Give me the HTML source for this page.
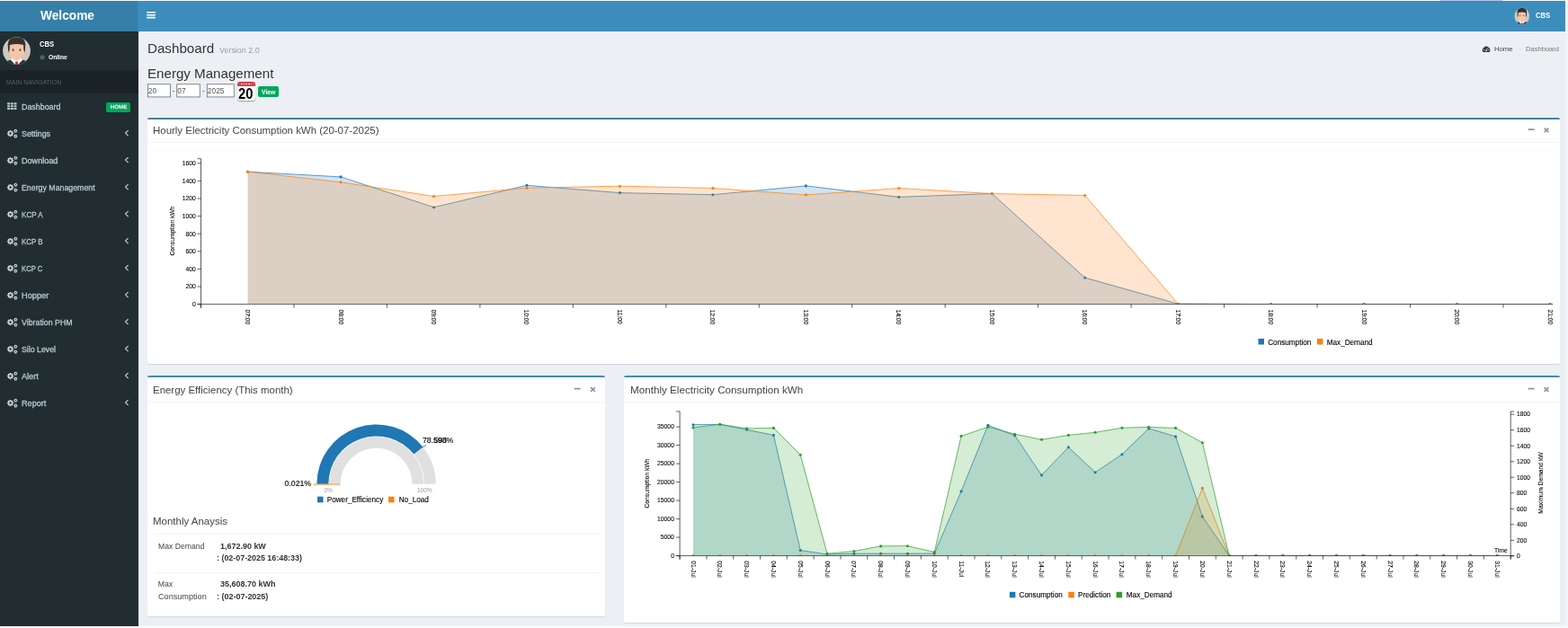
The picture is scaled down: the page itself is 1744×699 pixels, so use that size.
<!DOCTYPE html><html><head><meta charset="utf-8"><title>Dashboard</title><style>
html,body{margin:0;padding:0}
body{width:1744px;height:699px;overflow:hidden;background:#ecf0f5;position:relative;font-family:"Liberation Sans",sans-serif}
.a{position:absolute}
.t{position:absolute;white-space:pre;line-height:1;transform-origin:0 50%;font-family:"Liberation Sans",sans-serif}
#tx{position:absolute;left:0;top:0;width:1744px;height:699px;will-change:transform}
.box{position:absolute;background:#fff;border-top:2px solid #3c8dbc;border-radius:2px;box-shadow:0 1px 1px rgba(0,0,0,.1)}
.hl{position:absolute;height:1px;background:#f4f4f4}
svg{position:absolute;left:0;top:0;will-change:transform}
</style></head><body>
<div class="a" style="left:0;top:0;width:1744px;height:1px;background:#f6f8fa"></div>
<div class="a" style="left:1602px;top:0;width:69px;height:1px;background:#b4c6e6"></div>
<div class="a" style="left:0;top:1px;width:153px;height:34px;background:#367fa9"></div>
<div class="a" style="left:153px;top:1px;width:1588px;height:34px;background:#3c8dbc"></div>
<div class="a" style="left:0;top:35px;width:153.6px;height:664px;background:#222d32"></div>
<div class="a" style="left:0;top:78px;width:153.6px;height:26px;background:#1a2226"></div>
<div class="a" style="left:1740.6px;top:0;width:4px;height:699px;background:#f3f4f7"></div>
<div class="a" style="left:0;top:697.3px;width:1744px;height:2px;background:#f9fafc"></div>
<div class="a" style="left:118px;top:114px;width:27.4px;height:10.8px;background:#00a65a;border-radius:1.7px"></div>
<div class="box" style="left:163.6px;top:130.8px;width:1571px;height:272px;border-top-color:#4b7f9f"></div>
<div class="box" style="left:163.6px;top:418.3px;width:509.6px;height:265.9px"></div>
<div class="box" style="left:693.7px;top:418.3px;width:1040.9px;height:273.0px"></div>
<div class="hl" style="left:163.6px;top:158px;width:1571px"></div>
<div class="hl" style="left:169px;top:166.5px;width:1561px;background:#f7f7f7"></div>
<div class="hl" style="left:163.6px;top:447px;width:510px"></div>
<div class="hl" style="left:693.7px;top:447px;width:1040.9px"></div>
<div class="hl" style="left:171.5px;top:594.2px;width:495px"></div>
<div class="hl" style="left:171.5px;top:637.2px;width:495px"></div>
<div class="a" style="left:263.8px;top:91.2px;width:20.5px;height:20.7px;background:#fff;border-radius:3px;box-shadow:0 0.4px 1px rgba(0,0,0,.35);overflow:hidden"><div style="height:4.8px;background:#d8404c"></div></div>
<div class="a" style="left:267.5px;top:93.0px;width:13.5px;height:1.4px;background:repeating-linear-gradient(90deg,#f6d9dc 0 1.6px,transparent 1.6px 2.7px)"></div>
<div class="a" style="left:286.9px;top:95.9px;width:23.5px;height:11.9px;background:#00a65a;border-radius:2px"></div>
<svg width="1744" height="699" viewBox="0 0 1744 699">
<rect x="164.42" y="93.75" width="25.05" height="14.2" fill="#fff" stroke="#727272" stroke-width="0.85"/>
<rect x="196.72" y="93.75" width="25.55" height="14.2" fill="#fff" stroke="#727272" stroke-width="0.85"/>
<rect x="230.32" y="93.75" width="29.95" height="14.2" fill="#fff" stroke="#727272" stroke-width="0.85"/>
<rect x="163.1" y="12.9" width="9.8" height="1.6" rx="0.3" fill="#fff"/>
<rect x="163.1" y="15.9" width="9.8" height="1.6" rx="0.3" fill="#fff"/>
<rect x="163.1" y="18.8" width="9.8" height="1.6" rx="0.3" fill="#fff"/>
<rect x="8.10" y="114.30" width="3.0" height="2.1" rx="0.3" fill="#b8c7ce"/>
<rect x="11.80" y="114.30" width="3.0" height="2.1" rx="0.3" fill="#b8c7ce"/>
<rect x="15.50" y="114.30" width="3.0" height="2.1" rx="0.3" fill="#b8c7ce"/>
<rect x="8.10" y="117.15" width="3.0" height="2.1" rx="0.3" fill="#b8c7ce"/>
<rect x="11.80" y="117.15" width="3.0" height="2.1" rx="0.3" fill="#b8c7ce"/>
<rect x="15.50" y="117.15" width="3.0" height="2.1" rx="0.3" fill="#b8c7ce"/>
<rect x="8.10" y="120.00" width="3.0" height="2.1" rx="0.3" fill="#b8c7ce"/>
<rect x="11.80" y="120.00" width="3.0" height="2.1" rx="0.3" fill="#b8c7ce"/>
<rect x="15.50" y="120.00" width="3.0" height="2.1" rx="0.3" fill="#b8c7ce"/>
<path d="M15.19,147.91 L15.19,149.19 L14.43,149.24 L14.07,150.10 L14.58,150.68 L13.68,151.58 L13.10,151.07 L12.24,151.43 L12.19,152.19 L10.91,152.19 L10.86,151.43 L10.00,151.07 L9.42,151.58 L8.52,150.68 L9.03,150.10 L8.67,149.24 L7.91,149.19 L7.91,147.91 L8.67,147.86 L9.03,147.00 L8.52,146.42 L9.42,145.52 L10.00,146.03 L10.86,145.67 L10.91,144.91 L12.19,144.91 L12.24,145.67 L13.10,146.03 L13.68,145.52 L14.58,146.42 L14.07,147.00 L14.43,147.86Z M10.35,148.55 a1.20,1.20 0 1,0 2.40,0 a1.20,1.20 0 1,0 -2.40,0Z M19.44,145.26 L19.44,146.24 L18.94,146.27 L18.60,146.87 L18.82,147.32 L17.97,147.81 L17.70,147.39 L17.00,147.39 L16.73,147.81 L15.88,147.32 L16.10,146.87 L15.76,146.27 L15.26,146.24 L15.26,145.26 L15.76,145.23 L16.10,144.63 L15.88,144.18 L16.73,143.69 L17.00,144.11 L17.70,144.11 L17.97,143.69 L18.82,144.18 L18.60,144.63 L18.94,145.23Z M16.65,145.75 a0.70,0.70 0 1,0 1.40,0 a0.70,0.70 0 1,0 -1.40,0Z M19.39,151.11 L19.39,152.09 L18.89,152.12 L18.55,152.72 L18.77,153.17 L17.92,153.66 L17.65,153.24 L16.95,153.24 L16.68,153.66 L15.83,153.17 L16.05,152.72 L15.71,152.12 L15.21,152.09 L15.21,151.11 L15.71,151.08 L16.05,150.48 L15.83,150.03 L16.68,149.54 L16.95,149.96 L17.65,149.96 L17.92,149.54 L18.77,150.03 L18.55,150.48 L18.89,151.08Z M16.60,151.60 a0.70,0.70 0 1,0 1.40,0 a0.70,0.70 0 1,0 -1.40,0Z" fill="#c3d0d6" fill-rule="evenodd"/>
<path d="M142.60,145.10 L139.60,148.10 L142.60,151.10" stroke="#b8c7ce" stroke-width="1.3" fill="none"/>
<path d="M15.19,177.91 L15.19,179.19 L14.43,179.24 L14.07,180.10 L14.58,180.68 L13.68,181.58 L13.10,181.07 L12.24,181.43 L12.19,182.19 L10.91,182.19 L10.86,181.43 L10.00,181.07 L9.42,181.58 L8.52,180.68 L9.03,180.10 L8.67,179.24 L7.91,179.19 L7.91,177.91 L8.67,177.86 L9.03,177.00 L8.52,176.42 L9.42,175.52 L10.00,176.03 L10.86,175.67 L10.91,174.91 L12.19,174.91 L12.24,175.67 L13.10,176.03 L13.68,175.52 L14.58,176.42 L14.07,177.00 L14.43,177.86Z M10.35,178.55 a1.20,1.20 0 1,0 2.40,0 a1.20,1.20 0 1,0 -2.40,0Z M19.44,175.26 L19.44,176.24 L18.94,176.27 L18.60,176.87 L18.82,177.32 L17.97,177.81 L17.70,177.39 L17.00,177.39 L16.73,177.81 L15.88,177.32 L16.10,176.87 L15.76,176.27 L15.26,176.24 L15.26,175.26 L15.76,175.23 L16.10,174.63 L15.88,174.18 L16.73,173.69 L17.00,174.11 L17.70,174.11 L17.97,173.69 L18.82,174.18 L18.60,174.63 L18.94,175.23Z M16.65,175.75 a0.70,0.70 0 1,0 1.40,0 a0.70,0.70 0 1,0 -1.40,0Z M19.39,181.11 L19.39,182.09 L18.89,182.12 L18.55,182.72 L18.77,183.17 L17.92,183.66 L17.65,183.24 L16.95,183.24 L16.68,183.66 L15.83,183.17 L16.05,182.72 L15.71,182.12 L15.21,182.09 L15.21,181.11 L15.71,181.08 L16.05,180.48 L15.83,180.03 L16.68,179.54 L16.95,179.96 L17.65,179.96 L17.92,179.54 L18.77,180.03 L18.55,180.48 L18.89,181.08Z M16.60,181.60 a0.70,0.70 0 1,0 1.40,0 a0.70,0.70 0 1,0 -1.40,0Z" fill="#c3d0d6" fill-rule="evenodd"/>
<path d="M142.60,175.10 L139.60,178.10 L142.60,181.10" stroke="#b8c7ce" stroke-width="1.3" fill="none"/>
<path d="M15.19,207.91 L15.19,209.19 L14.43,209.24 L14.07,210.10 L14.58,210.68 L13.68,211.58 L13.10,211.07 L12.24,211.43 L12.19,212.19 L10.91,212.19 L10.86,211.43 L10.00,211.07 L9.42,211.58 L8.52,210.68 L9.03,210.10 L8.67,209.24 L7.91,209.19 L7.91,207.91 L8.67,207.86 L9.03,207.00 L8.52,206.42 L9.42,205.52 L10.00,206.03 L10.86,205.67 L10.91,204.91 L12.19,204.91 L12.24,205.67 L13.10,206.03 L13.68,205.52 L14.58,206.42 L14.07,207.00 L14.43,207.86Z M10.35,208.55 a1.20,1.20 0 1,0 2.40,0 a1.20,1.20 0 1,0 -2.40,0Z M19.44,205.26 L19.44,206.24 L18.94,206.27 L18.60,206.87 L18.82,207.32 L17.97,207.81 L17.70,207.39 L17.00,207.39 L16.73,207.81 L15.88,207.32 L16.10,206.87 L15.76,206.27 L15.26,206.24 L15.26,205.26 L15.76,205.23 L16.10,204.63 L15.88,204.18 L16.73,203.69 L17.00,204.11 L17.70,204.11 L17.97,203.69 L18.82,204.18 L18.60,204.63 L18.94,205.23Z M16.65,205.75 a0.70,0.70 0 1,0 1.40,0 a0.70,0.70 0 1,0 -1.40,0Z M19.39,211.11 L19.39,212.09 L18.89,212.12 L18.55,212.72 L18.77,213.17 L17.92,213.66 L17.65,213.24 L16.95,213.24 L16.68,213.66 L15.83,213.17 L16.05,212.72 L15.71,212.12 L15.21,212.09 L15.21,211.11 L15.71,211.08 L16.05,210.48 L15.83,210.03 L16.68,209.54 L16.95,209.96 L17.65,209.96 L17.92,209.54 L18.77,210.03 L18.55,210.48 L18.89,211.08Z M16.60,211.60 a0.70,0.70 0 1,0 1.40,0 a0.70,0.70 0 1,0 -1.40,0Z" fill="#c3d0d6" fill-rule="evenodd"/>
<path d="M142.60,205.10 L139.60,208.10 L142.60,211.10" stroke="#b8c7ce" stroke-width="1.3" fill="none"/>
<path d="M15.19,237.91 L15.19,239.19 L14.43,239.24 L14.07,240.10 L14.58,240.68 L13.68,241.58 L13.10,241.07 L12.24,241.43 L12.19,242.19 L10.91,242.19 L10.86,241.43 L10.00,241.07 L9.42,241.58 L8.52,240.68 L9.03,240.10 L8.67,239.24 L7.91,239.19 L7.91,237.91 L8.67,237.86 L9.03,237.00 L8.52,236.42 L9.42,235.52 L10.00,236.03 L10.86,235.67 L10.91,234.91 L12.19,234.91 L12.24,235.67 L13.10,236.03 L13.68,235.52 L14.58,236.42 L14.07,237.00 L14.43,237.86Z M10.35,238.55 a1.20,1.20 0 1,0 2.40,0 a1.20,1.20 0 1,0 -2.40,0Z M19.44,235.26 L19.44,236.24 L18.94,236.27 L18.60,236.87 L18.82,237.32 L17.97,237.81 L17.70,237.39 L17.00,237.39 L16.73,237.81 L15.88,237.32 L16.10,236.87 L15.76,236.27 L15.26,236.24 L15.26,235.26 L15.76,235.23 L16.10,234.63 L15.88,234.18 L16.73,233.69 L17.00,234.11 L17.70,234.11 L17.97,233.69 L18.82,234.18 L18.60,234.63 L18.94,235.23Z M16.65,235.75 a0.70,0.70 0 1,0 1.40,0 a0.70,0.70 0 1,0 -1.40,0Z M19.39,241.11 L19.39,242.09 L18.89,242.12 L18.55,242.72 L18.77,243.17 L17.92,243.66 L17.65,243.24 L16.95,243.24 L16.68,243.66 L15.83,243.17 L16.05,242.72 L15.71,242.12 L15.21,242.09 L15.21,241.11 L15.71,241.08 L16.05,240.48 L15.83,240.03 L16.68,239.54 L16.95,239.96 L17.65,239.96 L17.92,239.54 L18.77,240.03 L18.55,240.48 L18.89,241.08Z M16.60,241.60 a0.70,0.70 0 1,0 1.40,0 a0.70,0.70 0 1,0 -1.40,0Z" fill="#c3d0d6" fill-rule="evenodd"/>
<path d="M142.60,235.10 L139.60,238.10 L142.60,241.10" stroke="#b8c7ce" stroke-width="1.3" fill="none"/>
<path d="M15.19,267.91 L15.19,269.19 L14.43,269.24 L14.07,270.10 L14.58,270.68 L13.68,271.58 L13.10,271.07 L12.24,271.43 L12.19,272.19 L10.91,272.19 L10.86,271.43 L10.00,271.07 L9.42,271.58 L8.52,270.68 L9.03,270.10 L8.67,269.24 L7.91,269.19 L7.91,267.91 L8.67,267.86 L9.03,267.00 L8.52,266.42 L9.42,265.52 L10.00,266.03 L10.86,265.67 L10.91,264.91 L12.19,264.91 L12.24,265.67 L13.10,266.03 L13.68,265.52 L14.58,266.42 L14.07,267.00 L14.43,267.86Z M10.35,268.55 a1.20,1.20 0 1,0 2.40,0 a1.20,1.20 0 1,0 -2.40,0Z M19.44,265.26 L19.44,266.24 L18.94,266.27 L18.60,266.87 L18.82,267.32 L17.97,267.81 L17.70,267.39 L17.00,267.39 L16.73,267.81 L15.88,267.32 L16.10,266.87 L15.76,266.27 L15.26,266.24 L15.26,265.26 L15.76,265.23 L16.10,264.63 L15.88,264.18 L16.73,263.69 L17.00,264.11 L17.70,264.11 L17.97,263.69 L18.82,264.18 L18.60,264.63 L18.94,265.23Z M16.65,265.75 a0.70,0.70 0 1,0 1.40,0 a0.70,0.70 0 1,0 -1.40,0Z M19.39,271.11 L19.39,272.09 L18.89,272.12 L18.55,272.72 L18.77,273.17 L17.92,273.66 L17.65,273.24 L16.95,273.24 L16.68,273.66 L15.83,273.17 L16.05,272.72 L15.71,272.12 L15.21,272.09 L15.21,271.11 L15.71,271.08 L16.05,270.48 L15.83,270.03 L16.68,269.54 L16.95,269.96 L17.65,269.96 L17.92,269.54 L18.77,270.03 L18.55,270.48 L18.89,271.08Z M16.60,271.60 a0.70,0.70 0 1,0 1.40,0 a0.70,0.70 0 1,0 -1.40,0Z" fill="#c3d0d6" fill-rule="evenodd"/>
<path d="M142.60,265.10 L139.60,268.10 L142.60,271.10" stroke="#b8c7ce" stroke-width="1.3" fill="none"/>
<path d="M15.19,297.91 L15.19,299.19 L14.43,299.24 L14.07,300.10 L14.58,300.68 L13.68,301.58 L13.10,301.07 L12.24,301.43 L12.19,302.19 L10.91,302.19 L10.86,301.43 L10.00,301.07 L9.42,301.58 L8.52,300.68 L9.03,300.10 L8.67,299.24 L7.91,299.19 L7.91,297.91 L8.67,297.86 L9.03,297.00 L8.52,296.42 L9.42,295.52 L10.00,296.03 L10.86,295.67 L10.91,294.91 L12.19,294.91 L12.24,295.67 L13.10,296.03 L13.68,295.52 L14.58,296.42 L14.07,297.00 L14.43,297.86Z M10.35,298.55 a1.20,1.20 0 1,0 2.40,0 a1.20,1.20 0 1,0 -2.40,0Z M19.44,295.26 L19.44,296.24 L18.94,296.27 L18.60,296.87 L18.82,297.32 L17.97,297.81 L17.70,297.39 L17.00,297.39 L16.73,297.81 L15.88,297.32 L16.10,296.87 L15.76,296.27 L15.26,296.24 L15.26,295.26 L15.76,295.23 L16.10,294.63 L15.88,294.18 L16.73,293.69 L17.00,294.11 L17.70,294.11 L17.97,293.69 L18.82,294.18 L18.60,294.63 L18.94,295.23Z M16.65,295.75 a0.70,0.70 0 1,0 1.40,0 a0.70,0.70 0 1,0 -1.40,0Z M19.39,301.11 L19.39,302.09 L18.89,302.12 L18.55,302.72 L18.77,303.17 L17.92,303.66 L17.65,303.24 L16.95,303.24 L16.68,303.66 L15.83,303.17 L16.05,302.72 L15.71,302.12 L15.21,302.09 L15.21,301.11 L15.71,301.08 L16.05,300.48 L15.83,300.03 L16.68,299.54 L16.95,299.96 L17.65,299.96 L17.92,299.54 L18.77,300.03 L18.55,300.48 L18.89,301.08Z M16.60,301.60 a0.70,0.70 0 1,0 1.40,0 a0.70,0.70 0 1,0 -1.40,0Z" fill="#c3d0d6" fill-rule="evenodd"/>
<path d="M142.60,295.10 L139.60,298.10 L142.60,301.10" stroke="#b8c7ce" stroke-width="1.3" fill="none"/>
<path d="M15.19,327.91 L15.19,329.19 L14.43,329.24 L14.07,330.10 L14.58,330.68 L13.68,331.58 L13.10,331.07 L12.24,331.43 L12.19,332.19 L10.91,332.19 L10.86,331.43 L10.00,331.07 L9.42,331.58 L8.52,330.68 L9.03,330.10 L8.67,329.24 L7.91,329.19 L7.91,327.91 L8.67,327.86 L9.03,327.00 L8.52,326.42 L9.42,325.52 L10.00,326.03 L10.86,325.67 L10.91,324.91 L12.19,324.91 L12.24,325.67 L13.10,326.03 L13.68,325.52 L14.58,326.42 L14.07,327.00 L14.43,327.86Z M10.35,328.55 a1.20,1.20 0 1,0 2.40,0 a1.20,1.20 0 1,0 -2.40,0Z M19.44,325.26 L19.44,326.24 L18.94,326.27 L18.60,326.87 L18.82,327.32 L17.97,327.81 L17.70,327.39 L17.00,327.39 L16.73,327.81 L15.88,327.32 L16.10,326.87 L15.76,326.27 L15.26,326.24 L15.26,325.26 L15.76,325.23 L16.10,324.63 L15.88,324.18 L16.73,323.69 L17.00,324.11 L17.70,324.11 L17.97,323.69 L18.82,324.18 L18.60,324.63 L18.94,325.23Z M16.65,325.75 a0.70,0.70 0 1,0 1.40,0 a0.70,0.70 0 1,0 -1.40,0Z M19.39,331.11 L19.39,332.09 L18.89,332.12 L18.55,332.72 L18.77,333.17 L17.92,333.66 L17.65,333.24 L16.95,333.24 L16.68,333.66 L15.83,333.17 L16.05,332.72 L15.71,332.12 L15.21,332.09 L15.21,331.11 L15.71,331.08 L16.05,330.48 L15.83,330.03 L16.68,329.54 L16.95,329.96 L17.65,329.96 L17.92,329.54 L18.77,330.03 L18.55,330.48 L18.89,331.08Z M16.60,331.60 a0.70,0.70 0 1,0 1.40,0 a0.70,0.70 0 1,0 -1.40,0Z" fill="#c3d0d6" fill-rule="evenodd"/>
<path d="M142.60,325.10 L139.60,328.10 L142.60,331.10" stroke="#b8c7ce" stroke-width="1.3" fill="none"/>
<path d="M15.19,357.91 L15.19,359.19 L14.43,359.24 L14.07,360.10 L14.58,360.68 L13.68,361.58 L13.10,361.07 L12.24,361.43 L12.19,362.19 L10.91,362.19 L10.86,361.43 L10.00,361.07 L9.42,361.58 L8.52,360.68 L9.03,360.10 L8.67,359.24 L7.91,359.19 L7.91,357.91 L8.67,357.86 L9.03,357.00 L8.52,356.42 L9.42,355.52 L10.00,356.03 L10.86,355.67 L10.91,354.91 L12.19,354.91 L12.24,355.67 L13.10,356.03 L13.68,355.52 L14.58,356.42 L14.07,357.00 L14.43,357.86Z M10.35,358.55 a1.20,1.20 0 1,0 2.40,0 a1.20,1.20 0 1,0 -2.40,0Z M19.44,355.26 L19.44,356.24 L18.94,356.27 L18.60,356.87 L18.82,357.32 L17.97,357.81 L17.70,357.39 L17.00,357.39 L16.73,357.81 L15.88,357.32 L16.10,356.87 L15.76,356.27 L15.26,356.24 L15.26,355.26 L15.76,355.23 L16.10,354.63 L15.88,354.18 L16.73,353.69 L17.00,354.11 L17.70,354.11 L17.97,353.69 L18.82,354.18 L18.60,354.63 L18.94,355.23Z M16.65,355.75 a0.70,0.70 0 1,0 1.40,0 a0.70,0.70 0 1,0 -1.40,0Z M19.39,361.11 L19.39,362.09 L18.89,362.12 L18.55,362.72 L18.77,363.17 L17.92,363.66 L17.65,363.24 L16.95,363.24 L16.68,363.66 L15.83,363.17 L16.05,362.72 L15.71,362.12 L15.21,362.09 L15.21,361.11 L15.71,361.08 L16.05,360.48 L15.83,360.03 L16.68,359.54 L16.95,359.96 L17.65,359.96 L17.92,359.54 L18.77,360.03 L18.55,360.48 L18.89,361.08Z M16.60,361.60 a0.70,0.70 0 1,0 1.40,0 a0.70,0.70 0 1,0 -1.40,0Z" fill="#c3d0d6" fill-rule="evenodd"/>
<path d="M142.60,355.10 L139.60,358.10 L142.60,361.10" stroke="#b8c7ce" stroke-width="1.3" fill="none"/>
<path d="M15.19,387.91 L15.19,389.19 L14.43,389.24 L14.07,390.10 L14.58,390.68 L13.68,391.58 L13.10,391.07 L12.24,391.43 L12.19,392.19 L10.91,392.19 L10.86,391.43 L10.00,391.07 L9.42,391.58 L8.52,390.68 L9.03,390.10 L8.67,389.24 L7.91,389.19 L7.91,387.91 L8.67,387.86 L9.03,387.00 L8.52,386.42 L9.42,385.52 L10.00,386.03 L10.86,385.67 L10.91,384.91 L12.19,384.91 L12.24,385.67 L13.10,386.03 L13.68,385.52 L14.58,386.42 L14.07,387.00 L14.43,387.86Z M10.35,388.55 a1.20,1.20 0 1,0 2.40,0 a1.20,1.20 0 1,0 -2.40,0Z M19.44,385.26 L19.44,386.24 L18.94,386.27 L18.60,386.87 L18.82,387.32 L17.97,387.81 L17.70,387.39 L17.00,387.39 L16.73,387.81 L15.88,387.32 L16.10,386.87 L15.76,386.27 L15.26,386.24 L15.26,385.26 L15.76,385.23 L16.10,384.63 L15.88,384.18 L16.73,383.69 L17.00,384.11 L17.70,384.11 L17.97,383.69 L18.82,384.18 L18.60,384.63 L18.94,385.23Z M16.65,385.75 a0.70,0.70 0 1,0 1.40,0 a0.70,0.70 0 1,0 -1.40,0Z M19.39,391.11 L19.39,392.09 L18.89,392.12 L18.55,392.72 L18.77,393.17 L17.92,393.66 L17.65,393.24 L16.95,393.24 L16.68,393.66 L15.83,393.17 L16.05,392.72 L15.71,392.12 L15.21,392.09 L15.21,391.11 L15.71,391.08 L16.05,390.48 L15.83,390.03 L16.68,389.54 L16.95,389.96 L17.65,389.96 L17.92,389.54 L18.77,390.03 L18.55,390.48 L18.89,391.08Z M16.60,391.60 a0.70,0.70 0 1,0 1.40,0 a0.70,0.70 0 1,0 -1.40,0Z" fill="#c3d0d6" fill-rule="evenodd"/>
<path d="M142.60,385.10 L139.60,388.10 L142.60,391.10" stroke="#b8c7ce" stroke-width="1.3" fill="none"/>
<path d="M15.19,417.91 L15.19,419.19 L14.43,419.24 L14.07,420.10 L14.58,420.68 L13.68,421.58 L13.10,421.07 L12.24,421.43 L12.19,422.19 L10.91,422.19 L10.86,421.43 L10.00,421.07 L9.42,421.58 L8.52,420.68 L9.03,420.10 L8.67,419.24 L7.91,419.19 L7.91,417.91 L8.67,417.86 L9.03,417.00 L8.52,416.42 L9.42,415.52 L10.00,416.03 L10.86,415.67 L10.91,414.91 L12.19,414.91 L12.24,415.67 L13.10,416.03 L13.68,415.52 L14.58,416.42 L14.07,417.00 L14.43,417.86Z M10.35,418.55 a1.20,1.20 0 1,0 2.40,0 a1.20,1.20 0 1,0 -2.40,0Z M19.44,415.26 L19.44,416.24 L18.94,416.27 L18.60,416.87 L18.82,417.32 L17.97,417.81 L17.70,417.39 L17.00,417.39 L16.73,417.81 L15.88,417.32 L16.10,416.87 L15.76,416.27 L15.26,416.24 L15.26,415.26 L15.76,415.23 L16.10,414.63 L15.88,414.18 L16.73,413.69 L17.00,414.11 L17.70,414.11 L17.97,413.69 L18.82,414.18 L18.60,414.63 L18.94,415.23Z M16.65,415.75 a0.70,0.70 0 1,0 1.40,0 a0.70,0.70 0 1,0 -1.40,0Z M19.39,421.11 L19.39,422.09 L18.89,422.12 L18.55,422.72 L18.77,423.17 L17.92,423.66 L17.65,423.24 L16.95,423.24 L16.68,423.66 L15.83,423.17 L16.05,422.72 L15.71,422.12 L15.21,422.09 L15.21,421.11 L15.71,421.08 L16.05,420.48 L15.83,420.03 L16.68,419.54 L16.95,419.96 L17.65,419.96 L17.92,419.54 L18.77,420.03 L18.55,420.48 L18.89,421.08Z M16.60,421.60 a0.70,0.70 0 1,0 1.40,0 a0.70,0.70 0 1,0 -1.40,0Z" fill="#c3d0d6" fill-rule="evenodd"/>
<path d="M142.60,415.10 L139.60,418.10 L142.60,421.10" stroke="#b8c7ce" stroke-width="1.3" fill="none"/>
<path d="M15.19,447.91 L15.19,449.19 L14.43,449.24 L14.07,450.10 L14.58,450.68 L13.68,451.58 L13.10,451.07 L12.24,451.43 L12.19,452.19 L10.91,452.19 L10.86,451.43 L10.00,451.07 L9.42,451.58 L8.52,450.68 L9.03,450.10 L8.67,449.24 L7.91,449.19 L7.91,447.91 L8.67,447.86 L9.03,447.00 L8.52,446.42 L9.42,445.52 L10.00,446.03 L10.86,445.67 L10.91,444.91 L12.19,444.91 L12.24,445.67 L13.10,446.03 L13.68,445.52 L14.58,446.42 L14.07,447.00 L14.43,447.86Z M10.35,448.55 a1.20,1.20 0 1,0 2.40,0 a1.20,1.20 0 1,0 -2.40,0Z M19.44,445.26 L19.44,446.24 L18.94,446.27 L18.60,446.87 L18.82,447.32 L17.97,447.81 L17.70,447.39 L17.00,447.39 L16.73,447.81 L15.88,447.32 L16.10,446.87 L15.76,446.27 L15.26,446.24 L15.26,445.26 L15.76,445.23 L16.10,444.63 L15.88,444.18 L16.73,443.69 L17.00,444.11 L17.70,444.11 L17.97,443.69 L18.82,444.18 L18.60,444.63 L18.94,445.23Z M16.65,445.75 a0.70,0.70 0 1,0 1.40,0 a0.70,0.70 0 1,0 -1.40,0Z M19.39,451.11 L19.39,452.09 L18.89,452.12 L18.55,452.72 L18.77,453.17 L17.92,453.66 L17.65,453.24 L16.95,453.24 L16.68,453.66 L15.83,453.17 L16.05,452.72 L15.71,452.12 L15.21,452.09 L15.21,451.11 L15.71,451.08 L16.05,450.48 L15.83,450.03 L16.68,449.54 L16.95,449.96 L17.65,449.96 L17.92,449.54 L18.77,450.03 L18.55,450.48 L18.89,451.08Z M16.60,451.60 a0.70,0.70 0 1,0 1.40,0 a0.70,0.70 0 1,0 -1.40,0Z" fill="#c3d0d6" fill-rule="evenodd"/>
<path d="M142.60,445.10 L139.60,448.10 L142.60,451.10" stroke="#b8c7ce" stroke-width="1.3" fill="none"/>
<text x="122.7" y="121.3" font-size="6.3" font-weight="700" fill="#fff" font-family="Liberation Sans, sans-serif" textLength="18.6" lengthAdjust="spacingAndGlyphs" text-rendering="geometricPrecision">HOME</text>
<text x="291.0" y="104.9" font-size="7.8" font-weight="700" fill="#fff" font-family="Liberation Sans, sans-serif" textLength="15.3" lengthAdjust="spacingAndGlyphs" text-rendering="geometricPrecision">View</text>
<circle cx="47.0" cy="63.8" r="2.6" fill="#3a7040"/>
<rect x="1699.60" y="143.20" width="7.0" height="1.8" rx="0.5" fill="#8f94a3"/>
<path d="M1717.60,142.60 l4.8,4.6 M1722.40,142.60 l-4.8,4.6" stroke="#8e90aa" stroke-width="1.6"/>
<rect x="638.70" y="431.80" width="7.0" height="1.8" rx="0.5" fill="#8f94a3"/>
<path d="M657.00,431.20 l4.8,4.6 M661.80,431.20 l-4.8,4.6" stroke="#8e90aa" stroke-width="1.6"/>
<rect x="1699.60" y="431.80" width="7.0" height="1.8" rx="0.5" fill="#8f94a3"/>
<path d="M1717.60,431.20 l4.8,4.6 M1722.40,431.20 l-4.8,4.6" stroke="#8e90aa" stroke-width="1.6"/>
<path d="M1649.5,58.1 A4.2,4.2 0 1,1 1656.7,58.1 Z" fill="#3a3a3a"/><circle cx="1653.1" cy="56.3" r="0.9" fill="#ecf0f5"/><path d="M1653.1,56.3 L1654.9,53.4" stroke="#ecf0f5" stroke-width="0.7"/><circle cx="1650.6" cy="55.6" r="0.55" fill="#ecf0f5"/><circle cx="1655.7" cy="55.8" r="0.55" fill="#ecf0f5"/>
<g transform="translate(18.50,56.60) scale(0.9935,0.9935)"><defs><clipPath id="av1"><circle cx="0" cy="0" r="15.5"/></clipPath></defs><g clip-path="url(#av1)"><rect x="-16" y="-16" width="32" height="32" fill="#cdc8c3"/><path d="M-13,16 L-11,11.5 L-4,9 L4,9 L11,11.5 L13,16Z" fill="#2a2f35"/><path d="M-7,10 L-1,16 L1,16 L7,10 L3.5,7.5 L-3.5,7.5Z" fill="#fff"/><path d="M-1.3,12 L1.3,12 L1.9,16 L-1.9,16Z" fill="#c8323c"/><rect x="-3" y="5" width="6" height="5.5" fill="#e9b08f"/><ellipse cx="-8.8" cy="0" rx="1.5" ry="2.4" fill="#eebb9b"/><ellipse cx="8.8" cy="0" rx="1.5" ry="2.4" fill="#eebb9b"/><path d="M-8.1,-8 L8.1,-8 L8.1,1.5 Q7.8,7.5 0,11.3 Q-7.8,7.5 -8.1,1.5Z" fill="#f4c6a8"/><path d="M-9.3,2 L-9.9,-8 Q-9,-15.6 0,-15.4 Q9,-15.6 9.9,-8 L9.3,2 L7.9,-1 L7.6,-6.6 Q0,-8.8 -7.6,-6.6 L-7.9,-1Z" fill="#37312e"/><ellipse cx="-3.9" cy="-1.0" rx="0.95" ry="1.4" fill="#5a4030"/><ellipse cx="3.9" cy="-1.0" rx="0.95" ry="1.4" fill="#5a4030"/></g></g>
<g transform="translate(1692.80,18.00) scale(0.5355,0.5997)"><defs><clipPath id="av2"><circle cx="0" cy="0" r="15.5"/></clipPath></defs><g clip-path="url(#av2)"><rect x="-16" y="-16" width="32" height="32" fill="#cdc8c3"/><path d="M-13,16 L-11,11.5 L-4,9 L4,9 L11,11.5 L13,16Z" fill="#2a2f35"/><path d="M-7,10 L-1,16 L1,16 L7,10 L3.5,7.5 L-3.5,7.5Z" fill="#fff"/><path d="M-1.3,12 L1.3,12 L1.9,16 L-1.9,16Z" fill="#c8323c"/><rect x="-3" y="5" width="6" height="5.5" fill="#e9b08f"/><ellipse cx="-8.8" cy="0" rx="1.5" ry="2.4" fill="#eebb9b"/><ellipse cx="8.8" cy="0" rx="1.5" ry="2.4" fill="#eebb9b"/><path d="M-8.1,-8 L8.1,-8 L8.1,1.5 Q7.8,7.5 0,11.3 Q-7.8,7.5 -8.1,1.5Z" fill="#f4c6a8"/><path d="M-9.3,2 L-9.9,-8 Q-9,-15.6 0,-15.4 Q9,-15.6 9.9,-8 L9.3,2 L7.9,-1 L7.6,-6.6 Q0,-8.8 -7.6,-6.6 L-7.9,-1Z" fill="#37312e"/><ellipse cx="-3.9" cy="-1.0" rx="0.95" ry="1.4" fill="#5a4030"/><ellipse cx="3.9" cy="-1.0" rx="0.95" ry="1.4" fill="#5a4030"/></g></g>
<clipPath id="c1"><rect x="223.50" y="171.70" width="1503.70" height="166.60"/></clipPath><g clip-path="url(#c1)">
<polyline points="275.60,191.20 379.06,196.90 482.52,230.70 585.98,206.30 689.44,214.60 792.90,216.70 896.36,206.90 999.82,219.30 1103.28,215.50 1206.74,309.10 1310.20,338.20 1413.66,338.60 1517.12,338.60 1620.58,338.60 1724.04,338.60" fill="none" stroke="#1f77b4" stroke-width="0.72"/>
<polygon points="275.60,338.60 275.60,191.20 379.06,196.90 482.52,230.70 585.98,206.30 689.44,214.60 792.90,216.70 896.36,206.90 999.82,219.30 1103.28,215.50 1206.74,309.10 1310.20,338.20 1413.66,338.60 1517.12,338.60 1620.58,338.60 1724.04,338.60 1724.04,338.60" fill="#1f77b4" fill-opacity="0.2"/>
<circle cx="275.60" cy="191.20" r="1.55" fill="#1f77b4"/>
<circle cx="379.06" cy="196.90" r="1.55" fill="#1f77b4"/>
<circle cx="482.52" cy="230.70" r="1.55" fill="#1f77b4"/>
<circle cx="585.98" cy="206.30" r="1.55" fill="#1f77b4"/>
<circle cx="689.44" cy="214.60" r="1.55" fill="#1f77b4"/>
<circle cx="792.90" cy="216.70" r="1.55" fill="#1f77b4"/>
<circle cx="896.36" cy="206.90" r="1.55" fill="#1f77b4"/>
<circle cx="999.82" cy="219.30" r="1.55" fill="#1f77b4"/>
<circle cx="1103.28" cy="215.50" r="1.55" fill="#1f77b4"/>
<circle cx="1206.74" cy="309.10" r="1.55" fill="#1f77b4"/>
<circle cx="1310.20" cy="338.20" r="1.55" fill="#1f77b4"/>
<circle cx="1413.66" cy="338.60" r="1.55" fill="#1f77b4"/>
<circle cx="1517.12" cy="338.60" r="1.55" fill="#1f77b4"/>
<circle cx="1620.58" cy="338.60" r="1.55" fill="#1f77b4"/>
<circle cx="1724.04" cy="338.60" r="1.55" fill="#1f77b4"/>
<polyline points="275.60,191.10 379.06,202.80 482.52,218.50 585.98,209.20 689.44,207.20 792.90,209.40 896.36,216.90 999.82,209.50 1103.28,215.50 1206.74,217.50 1310.20,338.20 1413.66,338.60 1517.12,338.60 1620.58,338.60 1724.04,338.60" fill="none" stroke="#ff7f0e" stroke-width="0.72"/>
<polygon points="275.60,338.60 275.60,191.10 379.06,202.80 482.52,218.50 585.98,209.20 689.44,207.20 792.90,209.40 896.36,216.90 999.82,209.50 1103.28,215.50 1206.74,217.50 1310.20,338.20 1413.66,338.60 1517.12,338.60 1620.58,338.60 1724.04,338.60 1724.04,338.60" fill="#ff7f0e" fill-opacity="0.2"/>
<circle cx="275.60" cy="191.10" r="1.55" fill="#ff7f0e"/>
<circle cx="379.06" cy="202.80" r="1.55" fill="#ff7f0e"/>
<circle cx="482.52" cy="218.50" r="1.55" fill="#ff7f0e"/>
<circle cx="585.98" cy="209.20" r="1.55" fill="#ff7f0e"/>
<circle cx="689.44" cy="207.20" r="1.55" fill="#ff7f0e"/>
<circle cx="792.90" cy="209.40" r="1.55" fill="#ff7f0e"/>
<circle cx="896.36" cy="216.90" r="1.55" fill="#ff7f0e"/>
<circle cx="999.82" cy="209.50" r="1.55" fill="#ff7f0e"/>
<circle cx="1103.28" cy="215.50" r="1.55" fill="#ff7f0e"/>
<circle cx="1206.74" cy="217.50" r="1.55" fill="#ff7f0e"/>
<circle cx="1310.20" cy="338.20" r="1.55" fill="#ff7f0e"/>
<circle cx="1413.66" cy="338.60" r="1.55" fill="#ff7f0e"/>
<circle cx="1517.12" cy="338.60" r="1.55" fill="#ff7f0e"/>
<circle cx="1620.58" cy="338.60" r="1.55" fill="#ff7f0e"/>
<circle cx="1724.04" cy="338.60" r="1.55" fill="#ff7f0e"/>
</g>
<g stroke="#000" stroke-width="0.75" fill="none" stroke-opacity="0.85">
<path d="M219.50,176.70 H223.50 V338.60 H219.50"/>
<path d="M223.50,342.60 V338.60 H1727.20"/>
<path d="M219.50,338.60 H223.50"/>
<path d="M219.50,319.00 H223.50"/>
<path d="M219.50,299.40 H223.50"/>
<path d="M219.50,279.80 H223.50"/>
<path d="M219.50,260.20 H223.50"/>
<path d="M219.50,240.60 H223.50"/>
<path d="M219.50,221.00 H223.50"/>
<path d="M219.50,201.40 H223.50"/>
<path d="M219.50,181.80 H223.50"/>
<path d="M223.50,338.60 V342.60"/>
<path d="M326.96,338.60 V342.60"/>
<path d="M430.42,338.60 V342.60"/>
<path d="M533.88,338.60 V342.60"/>
<path d="M637.34,338.60 V342.60"/>
<path d="M740.80,338.60 V342.60"/>
<path d="M844.26,338.60 V342.60"/>
<path d="M947.72,338.60 V342.60"/>
<path d="M1051.18,338.60 V342.60"/>
<path d="M1154.64,338.60 V342.60"/>
<path d="M1258.10,338.60 V342.60"/>
<path d="M1361.56,338.60 V342.60"/>
<path d="M1465.02,338.60 V342.60"/>
<path d="M1568.48,338.60 V342.60"/>
<path d="M1671.94,338.60 V342.60"/>
</g>
<g font-family="Liberation Sans, sans-serif" font-size="6.76" fill="#000" stroke="#000" stroke-width="0.1" text-anchor="end">
<text x="217.70" y="340.95">0</text>
<text x="217.70" y="321.35">200</text>
<text x="217.70" y="301.75">400</text>
<text x="217.70" y="282.15">600</text>
<text x="217.70" y="262.55">800</text>
<text x="217.70" y="242.95">1000</text>
<text x="217.70" y="223.35">1200</text>
<text x="217.70" y="203.75">1400</text>
<text x="217.70" y="184.15">1600</text>
</g>
<g font-family="Liberation Sans, sans-serif" font-size="6.76" fill="#000" stroke="#000" stroke-width="0.1">
<text transform="translate(273.10,344.40) rotate(90)">07:00</text>
<text transform="translate(376.56,344.40) rotate(90)">08:00</text>
<text transform="translate(480.02,344.40) rotate(90)">09:00</text>
<text transform="translate(583.48,344.40) rotate(90)">10:00</text>
<text transform="translate(686.94,344.40) rotate(90)">11:00</text>
<text transform="translate(790.40,344.40) rotate(90)">12:00</text>
<text transform="translate(893.86,344.40) rotate(90)">13:00</text>
<text transform="translate(997.32,344.40) rotate(90)">14:00</text>
<text transform="translate(1100.78,344.40) rotate(90)">15:00</text>
<text transform="translate(1204.24,344.40) rotate(90)">16:00</text>
<text transform="translate(1307.70,344.40) rotate(90)">17:00</text>
<text transform="translate(1411.16,344.40) rotate(90)">18:00</text>
<text transform="translate(1514.62,344.40) rotate(90)">19:00</text>
<text transform="translate(1618.08,344.40) rotate(90)">20:00</text>
<text transform="translate(1721.54,344.40) rotate(90)">21:00</text>
<text transform="translate(193.50,257.00) rotate(-90)" text-anchor="middle">Consumption kWh</text>
</g>
<rect x="1399.5" y="376.9" width="6.5" height="6.6" fill="#1f77b4"/><rect x="1464.9" y="376.9" width="6.5" height="6.6" fill="#ff7f0e"/>
<g font-family="Liberation Sans, sans-serif" font-size="8.19" fill="#000" stroke="#000" stroke-width="0.12">
<text x="1410.20" y="383.50">Consumption</text>
<text x="1475.70" y="383.50">Max_Demand</text>
</g>
<path d="M352.40,538.70 A66.20,66.20 0 0,1 484.80,538.70 L471.90,538.70 A53.30,53.30 0 0,0 365.30,538.70 Z" fill="#e0e0e0"/>
<path d="M366.00,538.70 A52.60,52.60 0 0,1 471.20,538.70 L458.60,538.70 A40.00,40.00 0 0,0 378.60,538.70 Z" fill="#e0e0e0"/>
<path d="M352.40,538.70 A66.20,66.20 0 0,1 470.39,497.47 L460.30,505.50 A53.30,53.30 0 0,0 365.30,538.70 Z" fill="#1f77b4"/>
<path d="M348.6,539.1 H378.2" stroke="#ff7f0e" stroke-width="0.9"/>
<path d="M469.39,498.07 L473.79,495.27" stroke="#1f77b4" stroke-width="0.9"/>
<g font-family="Liberation Sans, sans-serif" font-size="8.7" fill="#000" stroke="#000" stroke-width="0.13">
<text x="469.90" y="493.20">78.598%</text>
<text x="482.69" y="493.20" opacity="0.75">593</text>
<text x="316.60" y="541.00">0.021%</text>
</g>
<g font-family="Liberation Sans, sans-serif" font-size="6.49" fill="#999">
<text x="360.40" y="547.50">0%</text>
<text x="464.00" y="547.50">100%</text>
</g>
<rect x="353.0" y="552.7" width="6.5" height="6.6" fill="#1f77b4"/><rect x="432.0" y="552.7" width="6.5" height="6.6" fill="#ff7f0e"/>
<g font-family="Liberation Sans, sans-serif" font-size="8.19" fill="#000" stroke="#000" stroke-width="0.12">
<text x="363.70" y="559.20">Power_Efficiency</text>
<text x="443.70" y="559.20">No_Load</text>
</g>
<clipPath id="c3"><rect x="756.10" y="453.00" width="924.10" height="165.30"/></clipPath><g clip-path="url(#c3)">
<polyline points="771.00,472.70 800.81,472.30 830.62,478.30 860.43,484.40 890.24,612.50 920.05,617.00 949.86,616.20 979.67,616.20 1009.48,616.20 1039.29,616.00 1069.10,546.90 1098.91,473.20 1128.72,484.70 1158.53,528.90 1188.34,497.80 1218.15,525.70 1247.96,505.80 1277.77,476.90 1307.58,485.90 1337.39,574.90 1367.20,618.60 1397.01,618.60 1426.82,618.60 1456.63,618.60 1486.44,618.60 1516.25,618.60 1546.06,618.60 1575.87,618.60 1605.68,618.60 1635.49,618.60 1665.30,618.60" fill="none" stroke="#1f77b4" stroke-width="0.72"/>
<polygon points="771.00,618.60 771.00,472.70 800.81,472.30 830.62,478.30 860.43,484.40 890.24,612.50 920.05,617.00 949.86,616.20 979.67,616.20 1009.48,616.20 1039.29,616.00 1069.10,546.90 1098.91,473.20 1128.72,484.70 1158.53,528.90 1188.34,497.80 1218.15,525.70 1247.96,505.80 1277.77,476.90 1307.58,485.90 1337.39,574.90 1367.20,618.60 1397.01,618.60 1426.82,618.60 1456.63,618.60 1486.44,618.60 1516.25,618.60 1546.06,618.60 1575.87,618.60 1605.68,618.60 1635.49,618.60 1665.30,618.60 1665.30,618.60" fill="#1f77b4" fill-opacity="0.2"/>
<circle cx="771.00" cy="472.70" r="1.55" fill="#1f77b4"/>
<circle cx="800.81" cy="472.30" r="1.55" fill="#1f77b4"/>
<circle cx="830.62" cy="478.30" r="1.55" fill="#1f77b4"/>
<circle cx="860.43" cy="484.40" r="1.55" fill="#1f77b4"/>
<circle cx="890.24" cy="612.50" r="1.55" fill="#1f77b4"/>
<circle cx="920.05" cy="617.00" r="1.55" fill="#1f77b4"/>
<circle cx="949.86" cy="616.20" r="1.55" fill="#1f77b4"/>
<circle cx="979.67" cy="616.20" r="1.55" fill="#1f77b4"/>
<circle cx="1009.48" cy="616.20" r="1.55" fill="#1f77b4"/>
<circle cx="1039.29" cy="616.00" r="1.55" fill="#1f77b4"/>
<circle cx="1069.10" cy="546.90" r="1.55" fill="#1f77b4"/>
<circle cx="1098.91" cy="473.20" r="1.55" fill="#1f77b4"/>
<circle cx="1128.72" cy="484.70" r="1.55" fill="#1f77b4"/>
<circle cx="1158.53" cy="528.90" r="1.55" fill="#1f77b4"/>
<circle cx="1188.34" cy="497.80" r="1.55" fill="#1f77b4"/>
<circle cx="1218.15" cy="525.70" r="1.55" fill="#1f77b4"/>
<circle cx="1247.96" cy="505.80" r="1.55" fill="#1f77b4"/>
<circle cx="1277.77" cy="476.90" r="1.55" fill="#1f77b4"/>
<circle cx="1307.58" cy="485.90" r="1.55" fill="#1f77b4"/>
<circle cx="1337.39" cy="574.90" r="1.55" fill="#1f77b4"/>
<circle cx="1367.20" cy="618.60" r="1.55" fill="#1f77b4"/>
<circle cx="1397.01" cy="618.60" r="1.55" fill="#1f77b4"/>
<circle cx="1426.82" cy="618.60" r="1.55" fill="#1f77b4"/>
<circle cx="1456.63" cy="618.60" r="1.55" fill="#1f77b4"/>
<circle cx="1486.44" cy="618.60" r="1.55" fill="#1f77b4"/>
<circle cx="1516.25" cy="618.60" r="1.55" fill="#1f77b4"/>
<circle cx="1546.06" cy="618.60" r="1.55" fill="#1f77b4"/>
<circle cx="1575.87" cy="618.60" r="1.55" fill="#1f77b4"/>
<circle cx="1605.68" cy="618.60" r="1.55" fill="#1f77b4"/>
<circle cx="1635.49" cy="618.60" r="1.55" fill="#1f77b4"/>
<circle cx="1665.30" cy="618.60" r="1.55" fill="#1f77b4"/>
<polyline points="771.00,618.60 800.81,618.60 830.62,618.60 860.43,618.60 890.24,618.60 920.05,618.60 949.86,618.60 979.67,618.60 1009.48,618.60 1039.29,618.60 1069.10,618.60 1098.91,618.60 1128.72,618.60 1158.53,618.60 1188.34,618.60 1218.15,618.60 1247.96,618.60 1277.77,618.60 1307.58,618.60 1337.39,543.30 1367.20,618.60 1397.01,618.60 1426.82,618.60 1456.63,618.60 1486.44,618.60 1516.25,618.60 1546.06,618.60 1575.87,618.60 1605.68,618.60 1635.49,618.60 1665.30,618.60" fill="none" stroke="#ff7f0e" stroke-width="0.72"/>
<polygon points="771.00,618.60 771.00,618.60 800.81,618.60 830.62,618.60 860.43,618.60 890.24,618.60 920.05,618.60 949.86,618.60 979.67,618.60 1009.48,618.60 1039.29,618.60 1069.10,618.60 1098.91,618.60 1128.72,618.60 1158.53,618.60 1188.34,618.60 1218.15,618.60 1247.96,618.60 1277.77,618.60 1307.58,618.60 1337.39,543.30 1367.20,618.60 1397.01,618.60 1426.82,618.60 1456.63,618.60 1486.44,618.60 1516.25,618.60 1546.06,618.60 1575.87,618.60 1605.68,618.60 1635.49,618.60 1665.30,618.60 1665.30,618.60" fill="#ff7f0e" fill-opacity="0.2"/>
<circle cx="771.00" cy="618.60" r="1.55" fill="#ff7f0e"/>
<circle cx="800.81" cy="618.60" r="1.55" fill="#ff7f0e"/>
<circle cx="830.62" cy="618.60" r="1.55" fill="#ff7f0e"/>
<circle cx="860.43" cy="618.60" r="1.55" fill="#ff7f0e"/>
<circle cx="890.24" cy="618.60" r="1.55" fill="#ff7f0e"/>
<circle cx="920.05" cy="618.60" r="1.55" fill="#ff7f0e"/>
<circle cx="949.86" cy="618.60" r="1.55" fill="#ff7f0e"/>
<circle cx="979.67" cy="618.60" r="1.55" fill="#ff7f0e"/>
<circle cx="1009.48" cy="618.60" r="1.55" fill="#ff7f0e"/>
<circle cx="1039.29" cy="618.60" r="1.55" fill="#ff7f0e"/>
<circle cx="1069.10" cy="618.60" r="1.55" fill="#ff7f0e"/>
<circle cx="1098.91" cy="618.60" r="1.55" fill="#ff7f0e"/>
<circle cx="1128.72" cy="618.60" r="1.55" fill="#ff7f0e"/>
<circle cx="1158.53" cy="618.60" r="1.55" fill="#ff7f0e"/>
<circle cx="1188.34" cy="618.60" r="1.55" fill="#ff7f0e"/>
<circle cx="1218.15" cy="618.60" r="1.55" fill="#ff7f0e"/>
<circle cx="1247.96" cy="618.60" r="1.55" fill="#ff7f0e"/>
<circle cx="1277.77" cy="618.60" r="1.55" fill="#ff7f0e"/>
<circle cx="1307.58" cy="618.60" r="1.55" fill="#ff7f0e"/>
<circle cx="1337.39" cy="543.30" r="1.55" fill="#ff7f0e"/>
<circle cx="1367.20" cy="618.60" r="1.55" fill="#ff7f0e"/>
<circle cx="1397.01" cy="618.60" r="1.55" fill="#ff7f0e"/>
<circle cx="1426.82" cy="618.60" r="1.55" fill="#ff7f0e"/>
<circle cx="1456.63" cy="618.60" r="1.55" fill="#ff7f0e"/>
<circle cx="1486.44" cy="618.60" r="1.55" fill="#ff7f0e"/>
<circle cx="1516.25" cy="618.60" r="1.55" fill="#ff7f0e"/>
<circle cx="1546.06" cy="618.60" r="1.55" fill="#ff7f0e"/>
<circle cx="1575.87" cy="618.60" r="1.55" fill="#ff7f0e"/>
<circle cx="1605.68" cy="618.60" r="1.55" fill="#ff7f0e"/>
<circle cx="1635.49" cy="618.60" r="1.55" fill="#ff7f0e"/>
<circle cx="1665.30" cy="618.60" r="1.55" fill="#ff7f0e"/>
<polyline points="771.00,475.90 800.81,472.30 830.62,476.90 860.43,476.40 890.24,506.30 920.05,616.20 949.86,613.50 979.67,607.90 1009.48,607.70 1039.29,614.50 1069.10,485.40 1098.91,475.20 1128.72,483.20 1158.53,489.30 1188.34,484.40 1218.15,481.30 1247.96,476.20 1277.77,475.40 1307.58,476.40 1337.39,492.70 1367.20,618.60 1397.01,618.60 1426.82,618.60 1456.63,618.60 1486.44,618.60 1516.25,618.60 1546.06,618.60 1575.87,618.60 1605.68,618.60 1635.49,618.60 1665.30,618.60" fill="none" stroke="#2ca02c" stroke-width="0.72"/>
<polygon points="771.00,618.60 771.00,475.90 800.81,472.30 830.62,476.90 860.43,476.40 890.24,506.30 920.05,616.20 949.86,613.50 979.67,607.90 1009.48,607.70 1039.29,614.50 1069.10,485.40 1098.91,475.20 1128.72,483.20 1158.53,489.30 1188.34,484.40 1218.15,481.30 1247.96,476.20 1277.77,475.40 1307.58,476.40 1337.39,492.70 1367.20,618.60 1397.01,618.60 1426.82,618.60 1456.63,618.60 1486.44,618.60 1516.25,618.60 1546.06,618.60 1575.87,618.60 1605.68,618.60 1635.49,618.60 1665.30,618.60 1665.30,618.60" fill="#2ca02c" fill-opacity="0.2"/>
<circle cx="771.00" cy="475.90" r="1.55" fill="#2ca02c"/>
<circle cx="800.81" cy="472.30" r="1.55" fill="#2ca02c"/>
<circle cx="830.62" cy="476.90" r="1.55" fill="#2ca02c"/>
<circle cx="860.43" cy="476.40" r="1.55" fill="#2ca02c"/>
<circle cx="890.24" cy="506.30" r="1.55" fill="#2ca02c"/>
<circle cx="920.05" cy="616.20" r="1.55" fill="#2ca02c"/>
<circle cx="949.86" cy="613.50" r="1.55" fill="#2ca02c"/>
<circle cx="979.67" cy="607.90" r="1.55" fill="#2ca02c"/>
<circle cx="1009.48" cy="607.70" r="1.55" fill="#2ca02c"/>
<circle cx="1039.29" cy="614.50" r="1.55" fill="#2ca02c"/>
<circle cx="1069.10" cy="485.40" r="1.55" fill="#2ca02c"/>
<circle cx="1098.91" cy="475.20" r="1.55" fill="#2ca02c"/>
<circle cx="1128.72" cy="483.20" r="1.55" fill="#2ca02c"/>
<circle cx="1158.53" cy="489.30" r="1.55" fill="#2ca02c"/>
<circle cx="1188.34" cy="484.40" r="1.55" fill="#2ca02c"/>
<circle cx="1218.15" cy="481.30" r="1.55" fill="#2ca02c"/>
<circle cx="1247.96" cy="476.20" r="1.55" fill="#2ca02c"/>
<circle cx="1277.77" cy="475.40" r="1.55" fill="#2ca02c"/>
<circle cx="1307.58" cy="476.40" r="1.55" fill="#2ca02c"/>
<circle cx="1337.39" cy="492.70" r="1.55" fill="#2ca02c"/>
<circle cx="1367.20" cy="618.60" r="1.55" fill="#2ca02c"/>
<circle cx="1397.01" cy="618.60" r="1.55" fill="#2ca02c"/>
<circle cx="1426.82" cy="618.60" r="1.55" fill="#2ca02c"/>
<circle cx="1456.63" cy="618.60" r="1.55" fill="#2ca02c"/>
<circle cx="1486.44" cy="618.60" r="1.55" fill="#2ca02c"/>
<circle cx="1516.25" cy="618.60" r="1.55" fill="#2ca02c"/>
<circle cx="1546.06" cy="618.60" r="1.55" fill="#2ca02c"/>
<circle cx="1575.87" cy="618.60" r="1.55" fill="#2ca02c"/>
<circle cx="1605.68" cy="618.60" r="1.55" fill="#2ca02c"/>
<circle cx="1635.49" cy="618.60" r="1.55" fill="#2ca02c"/>
<circle cx="1665.30" cy="618.60" r="1.55" fill="#2ca02c"/>
</g>
<g stroke="#000" stroke-width="0.75" fill="none" stroke-opacity="0.85">
<path d="M752.10,458.00 H756.10 V618.60 H752.10"/>
<path d="M1684.20,458.00 H1680.20 V618.60 H1684.20"/>
<path d="M756.10,622.60 V618.60 H1680.20 V622.60"/>
<path d="M752.10,618.60 H756.10"/>
<path d="M752.10,598.10 H756.10"/>
<path d="M752.10,577.60 H756.10"/>
<path d="M752.10,557.10 H756.10"/>
<path d="M752.10,536.60 H756.10"/>
<path d="M752.10,516.10 H756.10"/>
<path d="M752.10,495.60 H756.10"/>
<path d="M752.10,475.10 H756.10"/>
<path d="M1680.20,618.90 H1684.20"/>
<path d="M1680.20,601.37 H1684.20"/>
<path d="M1680.20,583.84 H1684.20"/>
<path d="M1680.20,566.31 H1684.20"/>
<path d="M1680.20,548.78 H1684.20"/>
<path d="M1680.20,531.25 H1684.20"/>
<path d="M1680.20,513.72 H1684.20"/>
<path d="M1680.20,496.19 H1684.20"/>
<path d="M1680.20,478.66 H1684.20"/>
<path d="M1680.20,461.13 H1684.20"/>
<path d="M756.10,618.60 V622.60"/>
<path d="M785.91,618.60 V622.60"/>
<path d="M815.72,618.60 V622.60"/>
<path d="M845.53,618.60 V622.60"/>
<path d="M875.34,618.60 V622.60"/>
<path d="M905.15,618.60 V622.60"/>
<path d="M934.96,618.60 V622.60"/>
<path d="M964.77,618.60 V622.60"/>
<path d="M994.58,618.60 V622.60"/>
<path d="M1024.39,618.60 V622.60"/>
<path d="M1054.20,618.60 V622.60"/>
<path d="M1084.01,618.60 V622.60"/>
<path d="M1113.82,618.60 V622.60"/>
<path d="M1143.63,618.60 V622.60"/>
<path d="M1173.44,618.60 V622.60"/>
<path d="M1203.25,618.60 V622.60"/>
<path d="M1233.05,618.60 V622.60"/>
<path d="M1262.86,618.60 V622.60"/>
<path d="M1292.67,618.60 V622.60"/>
<path d="M1322.48,618.60 V622.60"/>
<path d="M1352.29,618.60 V622.60"/>
<path d="M1382.10,618.60 V622.60"/>
<path d="M1411.91,618.60 V622.60"/>
<path d="M1441.72,618.60 V622.60"/>
<path d="M1471.53,618.60 V622.60"/>
<path d="M1501.34,618.60 V622.60"/>
<path d="M1531.15,618.60 V622.60"/>
<path d="M1560.96,618.60 V622.60"/>
<path d="M1590.77,618.60 V622.60"/>
<path d="M1620.58,618.60 V622.60"/>
<path d="M1650.39,618.60 V622.60"/>
<path d="M1680.20,618.60 V622.60"/>
</g>
<g font-family="Liberation Sans, sans-serif" font-size="6.76" fill="#000" stroke="#000" stroke-width="0.1" text-anchor="end">
<text x="749.90" y="620.95">0</text>
<text x="749.90" y="600.45">5000</text>
<text x="749.90" y="579.95">10000</text>
<text x="749.90" y="559.45">15000</text>
<text x="749.90" y="538.95">20000</text>
<text x="749.90" y="518.45">25000</text>
<text x="749.90" y="497.95">30000</text>
<text x="749.90" y="477.45">35000</text>
</g>
<g font-family="Liberation Sans, sans-serif" font-size="6.76" fill="#000" stroke="#000" stroke-width="0.1">
<text x="1687.00" y="621.25">0</text>
<text x="1687.00" y="603.72">200</text>
<text x="1687.00" y="586.19">400</text>
<text x="1687.00" y="568.66">600</text>
<text x="1687.00" y="551.13">800</text>
<text x="1687.00" y="533.60">1000</text>
<text x="1687.00" y="516.07">1200</text>
<text x="1687.00" y="498.54">1400</text>
<text x="1687.00" y="481.01">1600</text>
<text x="1687.00" y="463.48">1800</text>
<text transform="translate(768.50,624.30) rotate(90)">01-Jul</text>
<text transform="translate(798.31,624.30) rotate(90)">02-Jul</text>
<text transform="translate(828.12,624.30) rotate(90)">03-Jul</text>
<text transform="translate(857.93,624.30) rotate(90)">04-Jul</text>
<text transform="translate(887.74,624.30) rotate(90)">05-Jul</text>
<text transform="translate(917.55,624.30) rotate(90)">06-Jul</text>
<text transform="translate(947.36,624.30) rotate(90)">07-Jul</text>
<text transform="translate(977.17,624.30) rotate(90)">08-Jul</text>
<text transform="translate(1006.98,624.30) rotate(90)">09-Jul</text>
<text transform="translate(1036.79,624.30) rotate(90)">10-Jul</text>
<text transform="translate(1066.60,624.30) rotate(90)">11-Jul</text>
<text transform="translate(1096.41,624.30) rotate(90)">12-Jul</text>
<text transform="translate(1126.22,624.30) rotate(90)">13-Jul</text>
<text transform="translate(1156.03,624.30) rotate(90)">14-Jul</text>
<text transform="translate(1185.84,624.30) rotate(90)">15-Jul</text>
<text transform="translate(1215.65,624.30) rotate(90)">16-Jul</text>
<text transform="translate(1245.46,624.30) rotate(90)">17-Jul</text>
<text transform="translate(1275.27,624.30) rotate(90)">18-Jul</text>
<text transform="translate(1305.08,624.30) rotate(90)">19-Jul</text>
<text transform="translate(1334.89,624.30) rotate(90)">20-Jul</text>
<text transform="translate(1364.70,624.30) rotate(90)">21-Jul</text>
<text transform="translate(1394.51,624.30) rotate(90)">22-Jul</text>
<text transform="translate(1424.32,624.30) rotate(90)">23-Jul</text>
<text transform="translate(1454.13,624.30) rotate(90)">24-Jul</text>
<text transform="translate(1483.94,624.30) rotate(90)">25-Jul</text>
<text transform="translate(1513.75,624.30) rotate(90)">26-Jul</text>
<text transform="translate(1543.56,624.30) rotate(90)">27-Jul</text>
<text transform="translate(1573.37,624.30) rotate(90)">28-Jul</text>
<text transform="translate(1603.18,624.30) rotate(90)">29-Jul</text>
<text transform="translate(1632.99,624.30) rotate(90)">30-Jul</text>
<text transform="translate(1662.80,624.30) rotate(90)">31-Jul</text>
<text transform="translate(721.70,538.00) rotate(-90)" text-anchor="middle">Consumption kWh</text>
<text transform="translate(1716.30,537.50) rotate(-90)" text-anchor="middle">Maximum Demand kW</text>
<text x="1676.80" y="615.30" text-anchor="end">Time</text>
</g>
<rect x="1122.9" y="658.8" width="6.5" height="6.5" fill="#1f77b4"/><rect x="1188.3" y="658.8" width="6.5" height="6.5" fill="#ff7f0e"/><rect x="1241.6" y="658.8" width="6.5" height="6.5" fill="#2ca02c"/>
<g font-family="Liberation Sans, sans-serif" font-size="8.19" fill="#000" stroke="#000" stroke-width="0.12">
<text x="1133.60" y="665.00">Consumption</text>
<text x="1199.00" y="665.00">Prediction</text>
<text x="1252.80" y="665.00">Max_Demand</text>
</g>
</svg>
<div id="tx"><span class="t" style="left:44.68px;top:11.00px;font-size:13.8px;font-weight:700;color:#fff;transform:scaleX(0.9944);">Welcome</span>
<span class="t" style="left:1708.41px;top:13.00px;font-size:8.7px;font-weight:700;color:#fff;transform:scaleX(0.8850);">CBS</span>
<span class="t" style="left:44.00px;top:45.00px;font-size:8.8px;font-weight:700;color:#fff;transform:scaleX(0.8741);">CBS</span>
<span class="t" style="left:53.79px;top:60.00px;font-size:7.0px;font-weight:700;color:#fff;transform:scaleX(0.9527);">Online</span>
<span class="t" style="left:6.87px;top:88.00px;font-size:7.4px;font-weight:400;color:#4b646f;transform:scaleX(0.9409);">MAIN NAVIGATION</span>
<span class="t" style="left:23.81px;top:115.00px;font-size:8.7px;font-weight:400;color:#b8c7ce;-webkit-text-stroke:0.28px #b8c7ce;transform:scaleX(1.0216);">Dashboard</span>
<span class="t" style="left:23.81px;top:145.00px;font-size:8.7px;font-weight:400;color:#b8c7ce;-webkit-text-stroke:0.28px #b8c7ce;transform:scaleX(1.0205);">Settings</span>
<span class="t" style="left:23.81px;top:175.00px;font-size:8.7px;font-weight:400;color:#b8c7ce;-webkit-text-stroke:0.28px #b8c7ce;transform:scaleX(1.0464);">Download</span>
<span class="t" style="left:23.81px;top:205.00px;font-size:8.7px;font-weight:400;color:#b8c7ce;-webkit-text-stroke:0.28px #b8c7ce;transform:scaleX(1.0121);">Energy Management</span>
<span class="t" style="left:23.81px;top:235.00px;font-size:8.7px;font-weight:400;color:#b8c7ce;-webkit-text-stroke:0.28px #b8c7ce;transform:scaleX(0.9291);">KCP A</span>
<span class="t" style="left:23.81px;top:265.00px;font-size:8.7px;font-weight:400;color:#b8c7ce;-webkit-text-stroke:0.28px #b8c7ce;transform:scaleX(0.9118);">KCP B</span>
<span class="t" style="left:23.81px;top:295.00px;font-size:8.7px;font-weight:400;color:#b8c7ce;-webkit-text-stroke:0.28px #b8c7ce;transform:scaleX(0.8875);">KCP C</span>
<span class="t" style="left:23.81px;top:325.00px;font-size:8.7px;font-weight:400;color:#b8c7ce;-webkit-text-stroke:0.28px #b8c7ce;transform:scaleX(1.0609);">Hopper</span>
<span class="t" style="left:23.81px;top:355.00px;font-size:8.7px;font-weight:400;color:#b8c7ce;-webkit-text-stroke:0.28px #b8c7ce;transform:scaleX(1.0139);">Vibration PHM</span>
<span class="t" style="left:23.81px;top:385.00px;font-size:8.7px;font-weight:400;color:#b8c7ce;-webkit-text-stroke:0.28px #b8c7ce;transform:scaleX(1.0096);">Silo Level</span>
<span class="t" style="left:23.81px;top:415.00px;font-size:8.7px;font-weight:400;color:#b8c7ce;-webkit-text-stroke:0.28px #b8c7ce;transform:scaleX(1.0481);">Alert</span>
<span class="t" style="left:23.81px;top:445.00px;font-size:8.7px;font-weight:400;color:#b8c7ce;-webkit-text-stroke:0.28px #b8c7ce;transform:scaleX(1.0482);">Report</span>
<span class="t" style="left:163.52px;top:46.00px;font-size:15.0px;font-weight:400;color:#333;transform:scaleX(1.0103);">Dashboard</span>
<span class="t" style="left:244.38px;top:51.00px;font-size:9.4px;font-weight:400;color:#9a9da0;transform:scaleX(0.9523);">Version 2.0</span>
<span class="t" style="left:163.52px;top:74.00px;font-size:15.0px;font-weight:400;color:#333;transform:scaleX(1.0079);">Energy Management</span>
<span class="t" style="left:1662.06px;top:51.00px;font-size:7.5px;font-weight:400;color:#444;transform:scaleX(1.0279);">Home</span>
<span class="t" style="left:1688.90px;top:53.00px;font-size:5.5px;font-weight:400;color:#cfd3d8;">&gt;</span>
<span class="t" style="left:1696.96px;top:51.00px;font-size:7.5px;font-weight:400;color:#777;transform:scaleX(1.0101);">Dashboard</span>
<span class="t" style="left:164.82px;top:97.00px;font-size:8.4px;font-weight:400;color:#555;">20</span>
<span class="t" style="left:197.22px;top:97.00px;font-size:8.4px;font-weight:400;color:#555;">07</span>
<span class="t" style="left:230.82px;top:97.00px;font-size:8.4px;font-weight:400;color:#555;">2025</span>
<span class="t" style="left:191.60px;top:97.00px;font-size:9px;font-weight:400;color:#555;">-</span>
<span class="t" style="left:225.00px;top:97.00px;font-size:9px;font-weight:400;color:#555;">-</span>
<span class="t" style="left:265.48px;top:97.00px;font-size:16.0px;font-weight:700;color:#000;transform:scaleX(0.9215);">20</span>
<span class="t" style="left:170.10px;top:140.00px;font-size:11.0px;font-weight:400;color:#444;transform:scaleX(1.0413);">Hourly Electricity Consumption kWh (20-07-2025)</span>
<span class="t" style="left:170.20px;top:429.00px;font-size:11.0px;font-weight:400;color:#444;transform:scaleX(1.0406);">Energy Efficiency (This month)</span>
<span class="t" style="left:701.00px;top:429.00px;font-size:11.0px;font-weight:400;color:#444;transform:scaleX(1.0594);">Monthly Electricity Consumption kWh</span>
<span class="t" style="left:170.31px;top:575.00px;font-size:11.0px;font-weight:400;color:#444;transform:scaleX(1.0449);">Monthly Anaysis</span>
<span class="t" style="left:175.81px;top:604.00px;font-size:8.7px;font-weight:400;color:#444;transform:scaleX(0.9954);">Max Demand</span>
<span class="t" style="left:245.21px;top:604.00px;font-size:8.7px;font-weight:700;color:#333;transform:scaleX(1.0319);">1,672.90 kW</span>
<span class="t" style="left:241.11px;top:617.00px;font-size:8.7px;font-weight:700;color:#333;transform:scaleX(1.0237);">: (02-07-2025 16:48:33)</span>
<span class="t" style="left:175.81px;top:646.00px;font-size:8.7px;font-weight:400;color:#444;">Max</span>
<span class="t" style="left:175.81px;top:660.00px;font-size:8.7px;font-weight:400;color:#444;transform:scaleX(1.0494);">Consumption</span>
<span class="t" style="left:245.21px;top:646.00px;font-size:8.7px;font-weight:700;color:#333;transform:scaleX(1.0342);">35,608.70 kWh</span>
<span class="t" style="left:241.11px;top:660.00px;font-size:8.7px;font-weight:700;color:#333;transform:scaleX(1.0322);">: (02-07-2025)</span></div>
</body></html>
